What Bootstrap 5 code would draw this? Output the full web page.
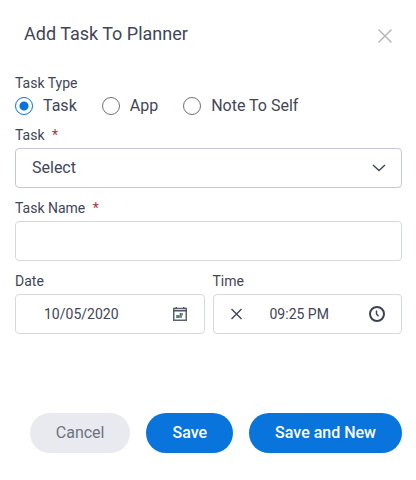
<!DOCTYPE html>
<html lang="en">
<head>
<meta charset="utf-8">
<meta name="viewport" content="width=device-width, initial-scale=1">
<title>Add Task To Planner</title>
<link href="https://cdn.jsdelivr.net/npm/bootstrap@5.3.0/dist/css/bootstrap.min.css" rel="stylesheet">
<style>
  body { font-family: Roboto, "Liberation Sans", sans-serif; color: #3f4658; background: #fff; }
  .planner { padding: 20px 14px 24px 15px; }
  .planner-header { margin-bottom: 21px; }
  .planner-title { font-size: 18px; line-height: 28px; font-weight: 400; padding-left: 9px; }
  .icon-btn { line-height: 0; color: #3f4658; }
  .close-btn { color: #b3b6bd; padding: 8px 10px; }
  .field-label { display: block; font-size: 14px; line-height: 20px; margin: 0 0 3px; padding: 0; float: none; }
  .req { color: #b3303c; margin-left: 4px; }
  .type-set { margin-bottom: 6px; }
  .type-options { gap: 25px; height: 26px; }
  .type-option { gap: 10px; min-height: 0; margin: 0; padding: 0; font-size: 16px; line-height: 24px; }
  .type-option .form-check-input { width: 18px; height: 18px; margin: 0; float: none; border: 1px solid #6b7080; background: #fff; }
  .type-option .form-check-input:checked { border-color: #0874dc; background: radial-gradient(circle, #0874dc 0 4px, #fff 5px); }
  .planner .form-control, .planner .form-select, .field-group { height: 40px; border: 1px solid #d6d8dd; border-radius: 4px; color: #3f4658; }
  .planner .form-select { border-color: #c4c8d6; font-size: 16px; padding: 0 40px 0 16px;
    background-image: none; }
  .select-arrow { position: absolute; right: 16px; top: 16px; pointer-events: none; }
  .field-stack { gap: 10px; }
  .planner .field-group .form-control { height: 38px; border: 0; background: transparent; font-size: 14px; padding: 0; min-width: 0; }
  .date-group { padding: 0 17px 0 28px; }
  .time-group { padding: 0 16px 0 17px; }
  .time-group .form-control { margin-left: 28px; }
  .planner-actions { gap: 16px; margin-top: 79px; }
  .planner-actions .btn { height: 40px; font-size: 16px; line-height: 24px; padding: 0 26px; border: 0; }
  .planner-actions .btn-save { background: #0874dc; color: #fff; font-weight: 500; }
  .planner-actions .btn-cancel { background: #e9eaf0; color: #6d7280; }
</style>
</head>
<body>
<form class="planner">
  <header class="planner-header d-flex justify-content-between align-items-start">
    <h1 class="planner-title mb-0">Add Task To Planner</h1>
    <button type="button" class="btn border-0 icon-btn close-btn" aria-label="Close">
      <svg width="14" height="16" viewBox="0 0 14 16" fill="none" stroke="currentColor" stroke-width="1.5"><path d="M.5 1.5l13 13M13.5 1.5l-13 13"/></svg>
    </button>
  </header>
  <fieldset class="type-set">
    <legend class="field-label mb-0">Task Type</legend>
    <div class="type-options d-flex align-items-center">
      <label class="type-option form-check d-flex align-items-center"><input class="form-check-input" type="radio" name="type" checked>Task</label>
      <label class="type-option form-check d-flex align-items-center"><input class="form-check-input" type="radio" name="type">App</label>
      <label class="type-option form-check d-flex align-items-center"><input class="form-check-input" type="radio" name="type">Note To Self</label>
    </div>
  </fieldset>
  <div class="field-stack d-flex flex-column">
    <div>
      <label class="field-label" for="task">Task <span class="req">*</span></label>
      <div class="position-relative">
        <select class="form-select" id="task"><option>Select</option></select>
        <svg class="select-arrow" width="14" height="8" viewBox="0 0 14 8" fill="none" stroke="#3f4658" stroke-width="1.4"><path d="M1 1l6 5.6L13 1"/></svg>
      </div>
    </div>
    <div>
      <label class="field-label" for="name">Task Name <span class="req">*</span></label>
      <input class="form-control" id="name" type="text">
    </div>
    <div class="d-flex gap-2">
      <div class="flex-fill w-50">
        <label class="field-label" for="date">Date</label>
        <div class="field-group date-group d-flex align-items-center">
          <input class="form-control" id="date" type="text" value="10/05/2020">
          <button type="button" class="btn border-0 p-0 icon-btn" aria-label="Choose date">
            <svg width="14" height="14" viewBox="0 0 14 14"><path d="M.75 1.5h12.5v11.75H.75z" fill="none" stroke="#5b6373" stroke-width="1.5"/><path d="M0 3h14v1.500H0zM2.500 0H4v2H2.500zM10 0h1.500v2H10z" fill="#4b5365"/><path d="M6.500 6H10v2.500H9V11H3V8h3.500z" fill="#6b9a8c"/><path d="M5 8v3M7.500 6.500v2" stroke="#3f6b62" stroke-width="1"/></svg>
          </button>
        </div>
      </div>
      <div class="flex-fill w-50">
        <label class="field-label" for="time">Time</label>
        <div class="field-group time-group d-flex align-items-center">
          <button type="button" class="btn border-0 p-0 icon-btn" aria-label="Clear time">
            <svg width="11" height="12" viewBox="0 0 11 12" fill="none" stroke="currentColor" stroke-width="1.4"><path d="M.5 1l10 10M10.500 1l-10 10"/></svg>
          </button>
          <input class="form-control" id="time" type="text" value="09:25 PM">
          <button type="button" class="btn border-0 p-0 icon-btn" aria-label="Choose time">
            <svg width="16" height="16" viewBox="0 0 16 16" fill="none" stroke="#3a4254"><circle cx="8" cy="8" r="7" stroke-width="2"/><path d="M7.500 4.500v3.500l2 2.200" stroke-width="1.4"/></svg>
          </button>
        </div>
      </div>
    </div>
  </div>
  <div class="planner-actions d-flex justify-content-end">
    <button type="button" class="btn rounded-pill btn-cancel">Cancel</button>
    <button type="submit" class="btn rounded-pill btn-save">Save</button>
    <button type="submit" class="btn rounded-pill btn-save text-nowrap">Save and New</button>
  </div>
</form>
<script src="https://cdn.jsdelivr.net/npm/bootstrap@5.3.0/dist/js/bootstrap.bundle.min.js"></script>
</body>
</html>
